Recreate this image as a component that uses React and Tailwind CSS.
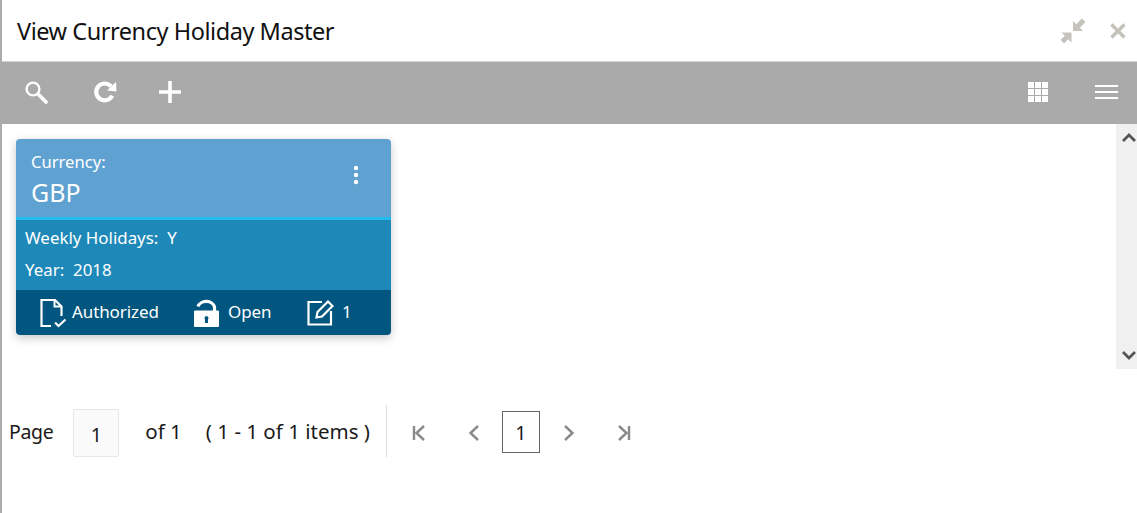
import React from "react";

function Search() {
  return (
    <svg width="26" height="26" viewBox="0 0 26 26" fill="none" stroke="#fff">
      <circle cx="10" cy="10" r="6.4" strokeWidth="2.4" />
      <path d="M15 15 L23 23" strokeWidth="3.8" strokeLinecap="round" />
    </svg>
  );
}
function Refresh() {
  return (
    <svg width="24" height="24" viewBox="0 0 24 24" fill="none">
      <path d="M19.2 15.6 A8.4 8.4 0 1 1 18 6.4" stroke="#fff" strokeWidth="4.2" />
      <path d="M14 10.5 L23.5 11.5 L23 2 Z" fill="#fff" />
    </svg>
  );
}
function Plus() {
  return (
    <svg width="24" height="24" viewBox="0 0 24 24" fill="none" stroke="#fff" strokeWidth="3.6">
      <path d="M1 12 H23 M12 1 V23" />
    </svg>
  );
}
function Grid() {
  return (
    <svg width="20" height="20" viewBox="0 0 20 20" fill="#fff">
      {[0, 7, 14].flatMap((y) =>
        [0, 7, 14].map((x) => <rect key={`${x}-${y}`} x={x} y={y} width="6" height="6" />)
      )}
    </svg>
  );
}
function Menu() {
  return (
    <svg width="24" height="14" viewBox="0 0 24 14" fill="#fff">
      <rect y="0" width="23" height="2" />
      <rect y="6" width="23" height="2" />
      <rect y="12" width="23" height="2" />
    </svg>
  );
}
function Collapse() {
  return (
    <svg width="26" height="26" viewBox="0 0 26 26" fill="#c4c2ba">
      <path d="M13 3 L13 13 L23 13 L19.8 9.8 L25.5 4 L21.8 0.5 L16.2 6.2 Z" />
      <path d="M11.5 14.5 L1.5 14.5 L4.8 17.8 L0.5 22 L4 25.5 L8.2 21.2 L11.5 24.5 Z" />
    </svg>
  );
}
function Close() {
  return (
    <svg width="16" height="16" viewBox="0 0 16 16" fill="none" stroke="#c4c2ba" strokeWidth="3.4">
      <path d="M1.5 1.5 L14.5 14.5 M14.5 1.5 L1.5 14.5" />
    </svg>
  );
}
function DocCheck() {
  return (
    <svg width="27" height="30" viewBox="0 0 27 30" fill="none" stroke="#fff" strokeWidth="2.2">
      <path d="M11 28 H1.5 V2 H15 L21.5 8.5 V18" />
      <path d="M14.5 2 V8.5 H21.5" strokeWidth="2" />
      <path d="M15 24.5 L18.5 28 L25.5 21.5" strokeWidth="2.2" />
    </svg>
  );
}
function Lock() {
  return (
    <svg width="27" height="30" viewBox="0 0 27 30">
      <path d="M5 8.5 A8.5 7 0 0 1 21.5 9 V13" fill="none" stroke="#fff" strokeWidth="3.2" />
      <path d="M1 13.5 Q1 12.5 2 12.5 H25 Q26 12.5 26 13.5 V28 Q26 29 25 29 H2 Q1 29 1 28 Z" fill="#fff" />
      <path d="M12 25 V21.5 A2 2 0 1 1 15 21.5 V25 Z" fill="#00567e" />
    </svg>
  );
}
function Edit() {
  return (
    <svg width="27" height="27" viewBox="0 0 27 27" fill="none" stroke="#fff" strokeWidth="2.2">
      <path d="M15 3 H1.5 V25.5 H24 V12" />
      <path d="M9.5 18.5 L10.5 13 L21 2.5 L25.5 7 L15 17.5 Z" />
    </svg>
  );
}
function Dots() {
  return (
    <svg width="6" height="20" viewBox="0 0 6 20" fill="#fff">
      <circle cx="3" cy="3" r="2.2" />
      <circle cx="3" cy="10" r="2.2" />
      <circle cx="3" cy="17" r="2.2" />
    </svg>
  );
}
function Chevron({ up }) {
  return (
    <svg width="14" height="10" viewBox="0 0 14 10" fill="none" stroke="#555" strokeWidth="2.8">
      <path d={up ? "M1 9 L7 3 L13 9" : "M1 1 L7 7 L13 1"} />
    </svg>
  );
}
function PageIcon({ d }) {
  return (
    <svg width="14" height="16" viewBox="0 0 14 16" fill="none" stroke="#8a8a8a" strokeWidth="2.4">
      <path d={d} />
    </svg>
  );
}

export default function App() {
  return (
    <div className="h-[513px] w-[1137px] overflow-hidden bg-white border-l-2 border-[#ababab] font-['Noto_Sans',sans-serif] text-[#1a1a1a] flex flex-col">
      <header className="h-[61px] shrink-0 flex items-center justify-between pl-[15px] pr-[11px]">
        <h1 className="text-[23.5px] tracking-[-0.45px] text-[#111] pt-[3px]">View Currency Holiday Master</h1>
        <div className="flex items-center gap-[24px]">
          <Collapse />
          <Close />
        </div>
      </header>
      <div className="h-[63px] shrink-0 bg-[#aaaaaa] border-t border-[#d4d4d4] flex items-center justify-between pl-[21px] pr-[18px] pb-[2px]">
        <div className="flex items-center">
          <div className="mr-[44px]"><Search /></div>
          <div className="mr-[41px]"><Refresh /></div>
          <Plus />
        </div>
        <div className="flex items-center gap-[47px]">
          <Grid />
          <Menu />
        </div>
      </div>
      <div className="h-[245px] shrink-0 flex">
        <div className="flex-1 pl-[14px] pt-[15px]">
          <div className="w-[375px] h-[196px] rounded-[4px] overflow-hidden shadow-[0_3px_10px_rgba(0,0,0,0.22)] text-white flex flex-col">
            <div className="h-[81px] shrink-0 bg-[#5fa2d1] border-b-[3px] border-[#21bdec] pl-[15px] pr-[32px] flex justify-between">
              <div className="pt-[11px]">
                <div className="text-[16.6px] leading-[24px]">Currency:</div>
                <div className="text-[25px] leading-[34px] mt-[1px]">GBP</div>
              </div>
              <div className="pt-[26px]"><Dots /></div>
            </div>
            <div className="h-[70px] shrink-0 bg-[#1e88b8] pl-[9px] pt-[2px] text-[16.9px] leading-[32px]">
              <div>Weekly Holidays:&nbsp; Y</div>
              <div>Year:&nbsp; 2018</div>
            </div>
            <div className="flex-1 bg-[#00567e] flex items-center pl-[24px] text-[17px] tracking-[-0.1px]">
              <DocCheck />
              <span className="ml-[5px] w-[121px] mb-[2px]">Authorized</span>
              <Lock />
              <span className="ml-[8px] w-[79px] mb-[2px]">Open</span>
              <Edit />
              <span className="ml-[8px] mb-[2px]">1</span>
            </div>
          </div>
        </div>
        <div className="w-[21px] bg-[#f0f0f0] flex flex-col items-center justify-between pl-[5px] pt-[8px] pb-[8px]">
          <Chevron up />
          <Chevron />
        </div>
      </div>
      <div className="flex items-center h-[52px] mt-[36px] pl-[7px] text-[19.5px]">
        <span className="tracking-[-0.35px] mt-[1px]">Page</span>
        <div className="ml-[20px] mt-[4px] w-[46px] h-[48px] bg-[#fafafa] border border-[#e6e6e6] rounded-[2px] flex items-center justify-center pt-[4px]">1</div>
        <span className="ml-[26px] text-[20.5px]">of 1</span>
        <span className="ml-[24px] text-[20.5px]">( 1 - 1 of 1 items )</span>
        <div className="ml-[16px] h-[52px] border-l border-[#dcdcdc]"></div>
        <div className="ml-[25px] mt-[4px]"><PageIcon d="M2 1 V15 M12 1 L4.5 8 L12 15" /></div>
        <div className="ml-[41px] mt-[4px]"><PageIcon d="M11 1 L3.5 8 L11 15" /></div>
        <div className="ml-[21px] mt-[2px] w-[38px] h-[42px] border border-[#666] flex items-center justify-center pt-[2px]">1</div>
        <div className="ml-[22px] mt-[4px]"><PageIcon d="M3 1 L10.5 8 L3 15" /></div>
        <div className="ml-[41px] mt-[4px]"><PageIcon d="M2 1 L9.5 8 L2 15 M12 1 V15" /></div>
      </div>
    </div>
  );
}
